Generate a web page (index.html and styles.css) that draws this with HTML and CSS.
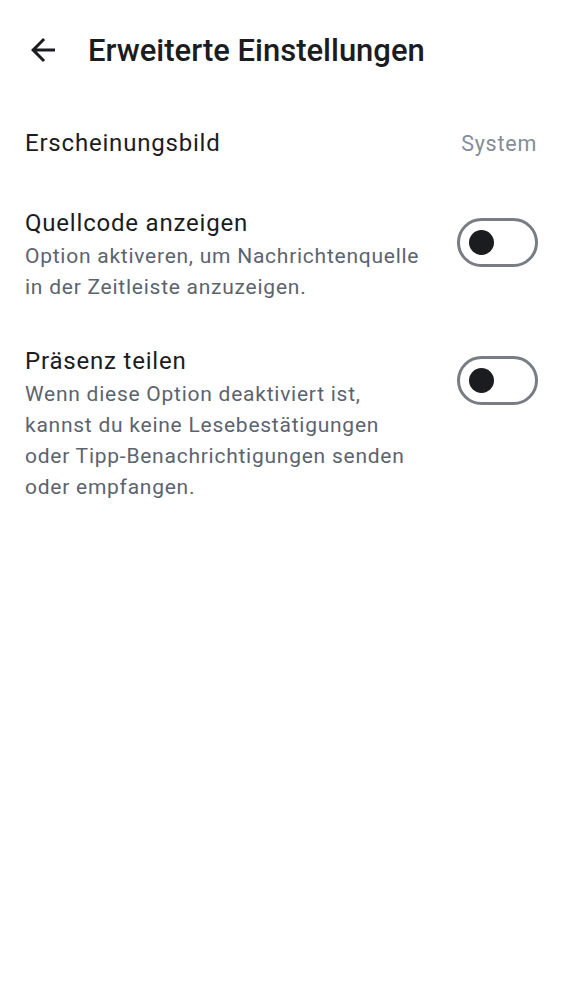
FILE: index.html
```html
<!DOCTYPE html>
<html lang="de">
<head>
<meta charset="utf-8">
<link rel="stylesheet" href="styles.css">
</head>
<body>
<div class="screen">
  <header class="topbar">
    <button class="back" aria-label="Zurück">
      <svg width="24" height="24" viewBox="0 0 24 24"><path d="M20 11H7.83l5.59-5.59L12 4l-8 8 8 8 1.41-1.41L7.83 13H20v-2z" fill="#1b1c1f"/></svg>
    </button>
    <h1 class="title">Erweiterte Einstellungen</h1>
  </header>
  <div class="list">
    <div class="row row-simple">
      <div class="label">Erscheinungsbild</div>
      <div class="value">System</div>
    </div>
    <div class="row">
      <div class="text">
        <div class="label">Quellcode anzeigen</div>
        <div class="desc">Option aktiveren, um Nachrichtenquelle in der Zeitleiste anzuzeigen.</div>
      </div>
      <div class="switch"><span class="thumb"></span></div>
    </div>
    <div class="row">
      <div class="text">
        <div class="label">Präsenz teilen</div>
        <div class="desc">Wenn diese Option deaktiviert ist, kannst du keine Lesebestätigungen oder Tipp-Benachrichtigungen senden oder empfangen.</div>
      </div>
      <div class="switch"><span class="thumb"></span></div>
    </div>
  </div>
</div>
</body>
</html>
```
FILE: styles.css
```css
html, body {
  margin: 0;
  padding: 0;
  background: #ffffff;
}
body {
  font-family: Roboto, "Noto Sans", sans-serif;
  color: #1b1c1f;
}
.screen {
  width: 562px;
  min-height: 1000px;
}
.topbar {
  display: flex;
  align-items: center;
  height: 100px;
  padding: 0 0 0 19px;
}
.back {
  width: 48px;
  height: 48px;
  border: 0;
  background: none;
  padding: 0;
  display: flex;
  align-items: center;
  justify-content: center;
}
.back svg {
  width: 36px;
  height: 36px;
}
.title {
  margin: 0 0 0 21px;
  font-size: 31px;
  font-weight: 500;
  letter-spacing: 0;
}
.list {
  display: flex;
  flex-direction: column;
}
.row {
  display: flex;
  align-items: flex-start;
  justify-content: space-between;
  padding: 0 25px;
}
.row-simple {
  align-items: center;
  height: 86px;
}
.label {
  font-size: 24px;
  line-height: 32px;
  letter-spacing: 0.8px;
}
.value {
  font-size: 21.5px;
  letter-spacing: 0.75px;
  color: #858c96;
}
.text {
  width: 402px;
}
.desc {
  margin-top: 2px;
  font-size: 21px;
  line-height: 31.3px;
  letter-spacing: 0.75px;
  color: #5c6370;
}
.row + .row {
  margin-top: 21px;
}
.row + .row + .row {
  margin-top: 41px;
}
.switch {
  box-sizing: border-box;
  width: 81px;
  height: 49px;
  border: 3px solid #787c85;
  border-radius: 25px;
  margin-top: 11px;
  display: flex;
  align-items: center;
  padding-left: 9px;
  flex-shrink: 0;
  margin-right: -1px;
}
.thumb {
  width: 25px;
  height: 25px;
  border-radius: 50%;
  background: #1b1c1f;
}
```
